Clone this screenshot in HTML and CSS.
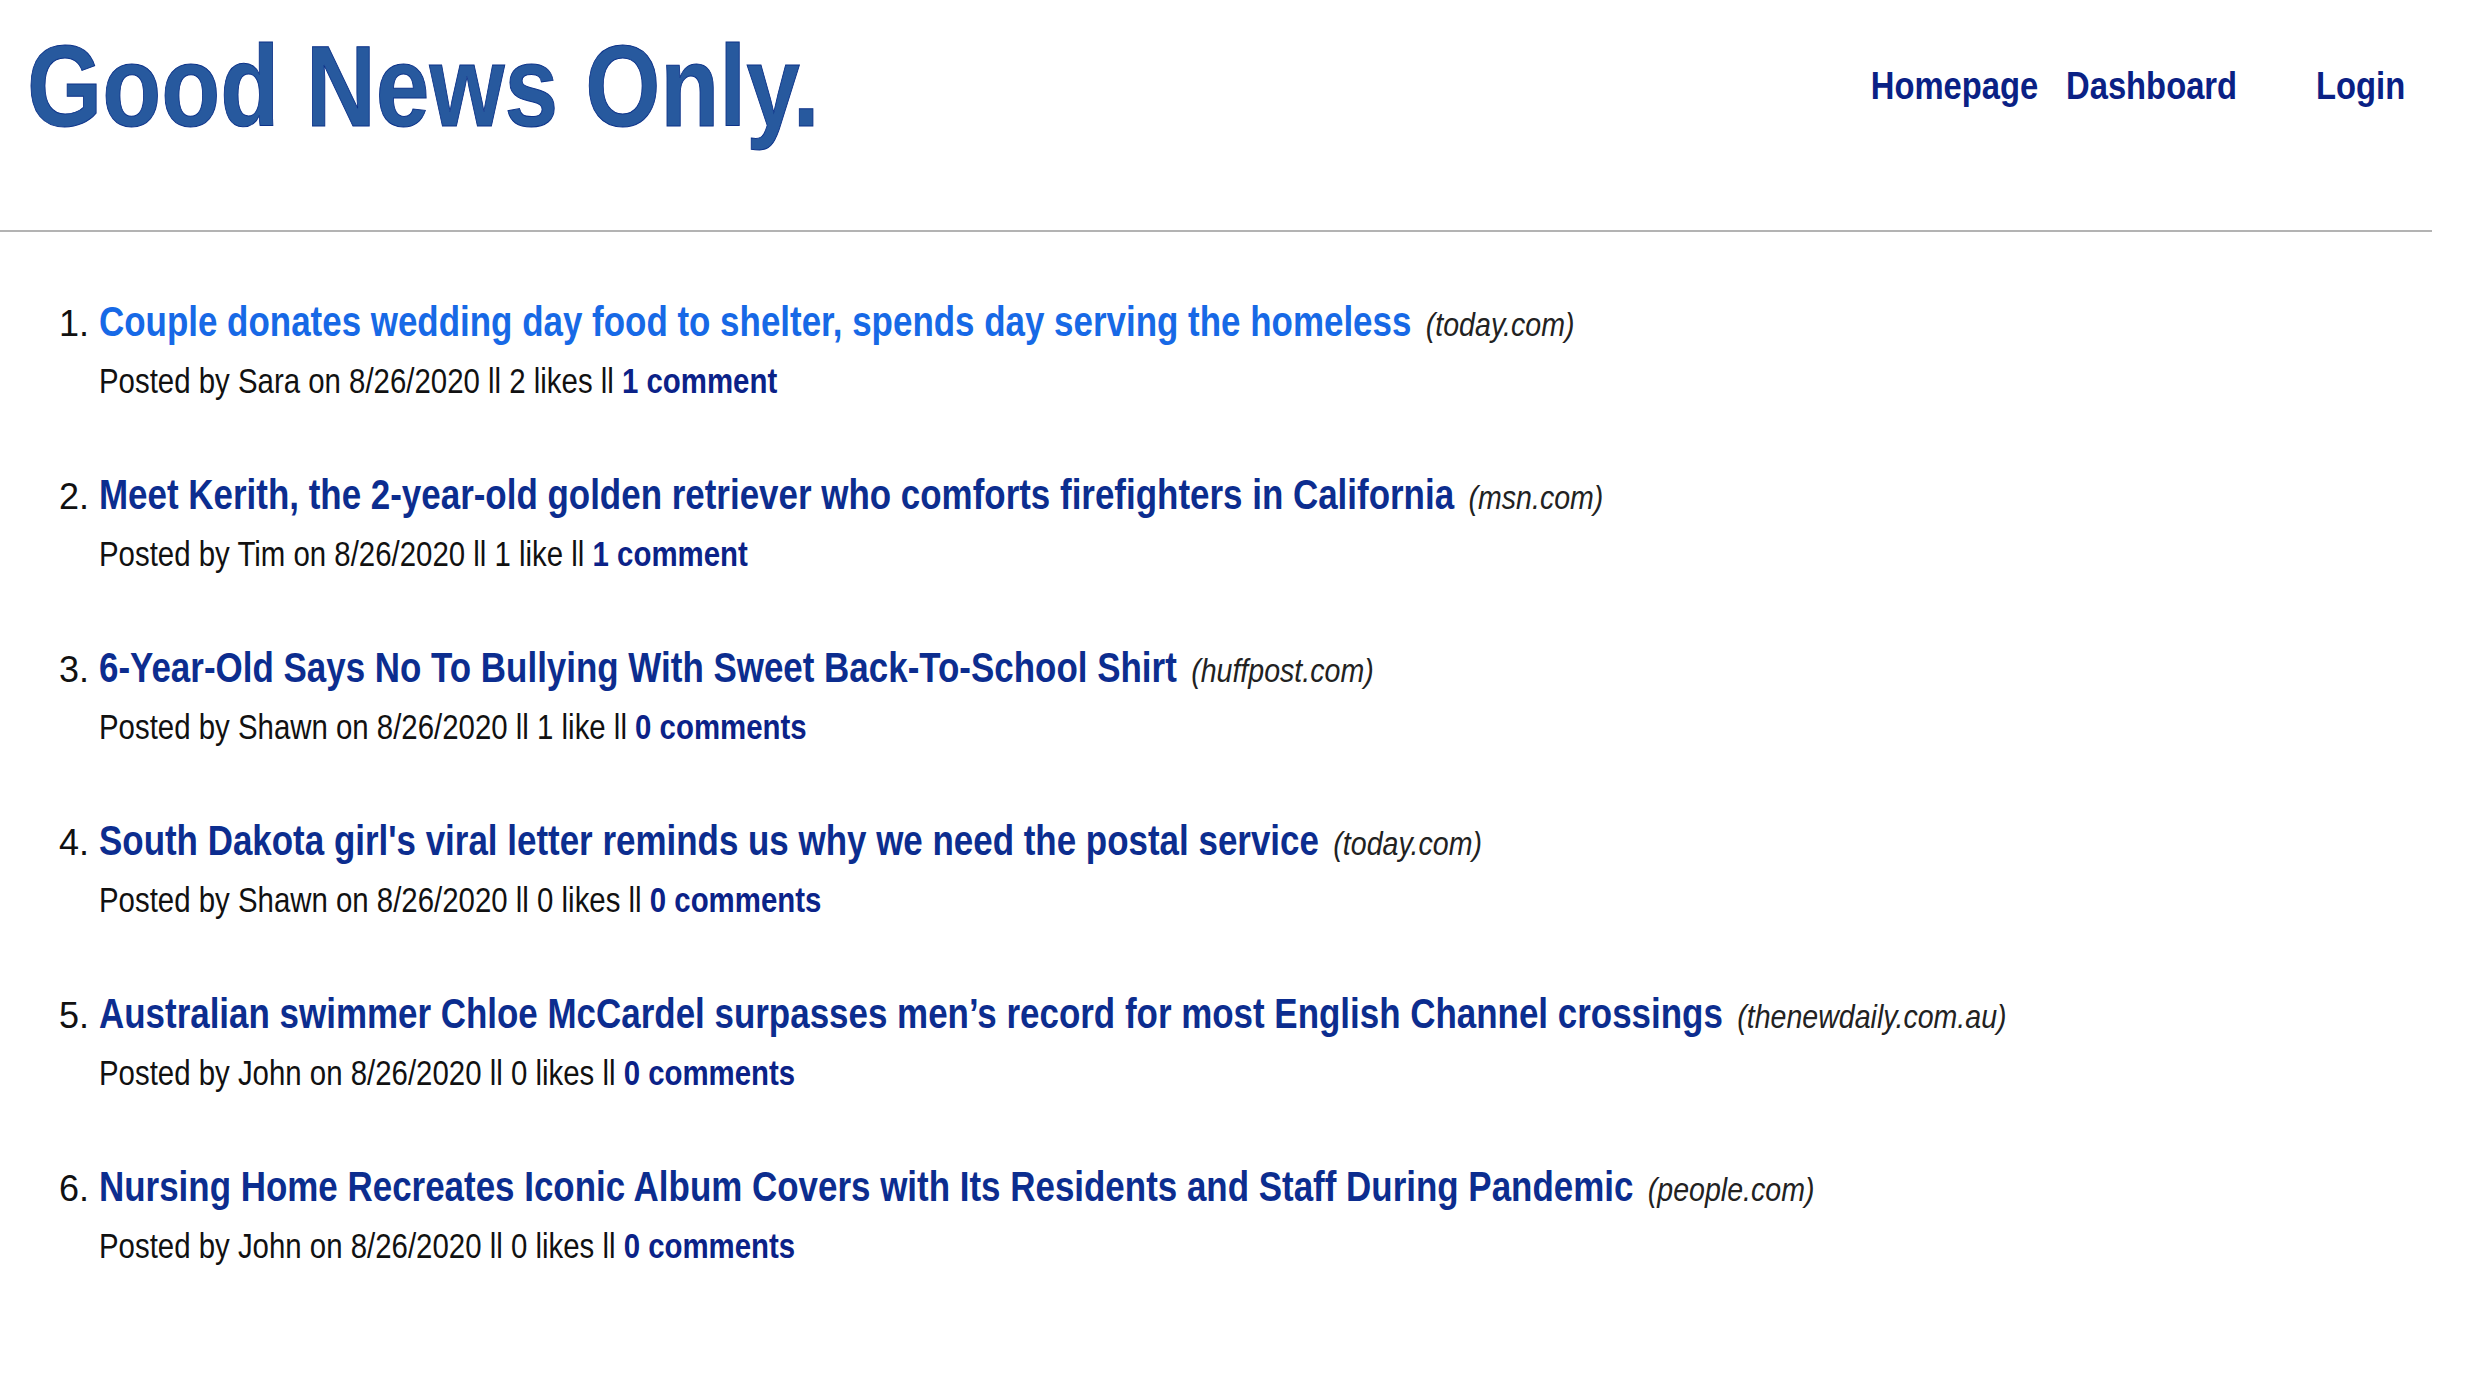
FILE: index.html
```html
<!DOCTYPE html>
<html lang="en">
<head>
<meta charset="utf-8">
<title>Good News Only.</title>
<link rel="stylesheet" href="styles.css">
</head>
<body>
<div class="page">
  <header class="site-header">
    <h1 class="brand">Good News Only.</h1>
    <nav class="nav">
      <a href="#">Homepage</a>
      <a href="#">Dashboard</a>
      <a href="#" class="nav-login">Login</a>
    </nav>
  </header>
  <main>
    <ol class="posts">
      <li class="post">
        <div class="post-title"><a class="post-link post-link--active" href="#">Couple donates wedding day food to shelter, spends day serving the homeless</a> <span class="post-source">(today.com)</span></div>
        <p class="post-meta">Posted by Sara on 8/26/2020 ll 2 likes ll <a href="#">1 comment</a></p>
      </li>
      <li class="post">
        <div class="post-title"><a class="post-link" href="#">Meet Kerith, the 2-year-old golden retriever who comforts firefighters in California</a> <span class="post-source">(msn.com)</span></div>
        <p class="post-meta">Posted by Tim on 8/26/2020 ll 1 like ll <a href="#">1 comment</a></p>
      </li>
      <li class="post">
        <div class="post-title"><a class="post-link" href="#">6-Year-Old Says No To Bullying With Sweet Back-To-School Shirt</a> <span class="post-source">(huffpost.com)</span></div>
        <p class="post-meta">Posted by Shawn on 8/26/2020 ll 1 like ll <a href="#">0 comments</a></p>
      </li>
      <li class="post">
        <div class="post-title"><a class="post-link" href="#">South Dakota girl's viral letter reminds us why we need the postal service</a> <span class="post-source">(today.com)</span></div>
        <p class="post-meta">Posted by Shawn on 8/26/2020 ll 0 likes ll <a href="#">0 comments</a></p>
      </li>
      <li class="post">
        <div class="post-title"><a class="post-link" href="#">Australian swimmer Chloe McCardel surpasses men’s record for most English Channel crossings</a> <span class="post-source">(thenewdaily.com.au)</span></div>
        <p class="post-meta">Posted by John on 8/26/2020 ll 0 likes ll <a href="#">0 comments</a></p>
      </li>
      <li class="post">
        <div class="post-title"><a class="post-link" href="#">Nursing Home Recreates Iconic Album Covers with Its Residents and Staff During Pandemic</a> <span class="post-source">(people.com)</span></div>
        <p class="post-meta">Posted by John on 8/26/2020 ll 0 likes ll <a href="#">0 comments</a></p>
      </li>
    </ol>
  </main>
</div>
</body>
</html>
```
FILE: styles.css
```css
html, body {
  margin: 0;
  padding: 0;
  background: #ffffff;
}

.page {
  width: 2432px;
  font-family: "Liberation Sans", Arial, Helvetica, sans-serif;
  color: #111111;
}

.site-header {
  display: flex;
  justify-content: space-between;
  align-items: flex-start;
  padding: 29px 27px 86px 27px;
  border-bottom: 2px solid #b3b3b3;
}

.brand {
  margin: 0;
  font-size: 115px;
  line-height: 115px;
  font-weight: 700;
  color: #27599e;
  -webkit-text-stroke: 1px #0c3289;
  transform: scaleX(0.84);
  transform-origin: left top;
}

.nav {
  display: flex;
  margin-top: 34px;
  font-size: 39px;
  line-height: 45px;
  font-weight: 700;
  transform: scaleX(0.84);
  transform-origin: right top;
}

.nav a {
  color: #0a2185;
  text-decoration: none;
}

.nav a + a {
  margin-left: 33px;
}

.nav .nav-login {
  margin-left: 94px;
}

.posts {
  margin: 0;
  padding: 66px 0 0 99px;
  list-style: decimal;
}

.post {
  font-size: 40px;
  line-height: 48px;
  color: #111111;
  margin-bottom: 70px;
}

.post::marker {
  font-size: 36px;
}

.post-title {
  line-height: 48px;
  transform: scaleX(0.84);
  transform-origin: left top;
}

.post-link {
  font-size: 41.6px;
  font-weight: 700;
  color: #0c2d8f;
  text-decoration: none;
}

.post-link--active {
  color: #1769e6;
}

.post-source {
  font-size: 34px;
  font-style: italic;
  color: #222222;
  margin-left: 6px;
}

.post-meta {
  margin: 13px 0 0;
  font-size: 35px;
  line-height: 40px;
  color: #111111;
  transform: scaleX(0.84);
  transform-origin: left top;
}

.post-meta a {
  font-weight: 700;
  color: #0b2288;
  text-decoration: none;
}
```
